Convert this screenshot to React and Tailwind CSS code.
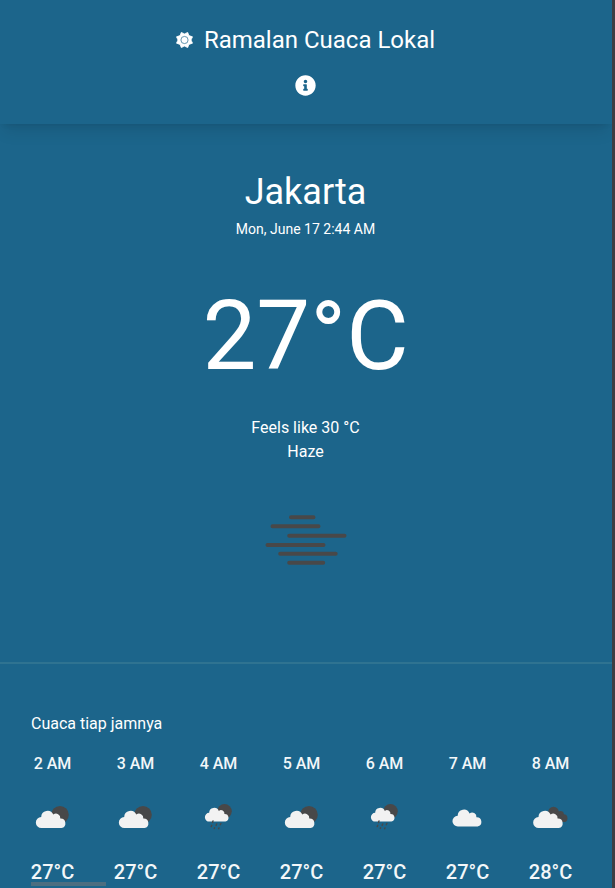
import { FaInfoCircle } from "react-icons/fa";

const CLOUD =
  "M5.500 22a5.500 5.500 0 0 1-.3-11A6.300 6.300 0 0 1 17.300 8.600a4.300 4.300 0 0 1 7 3.900A4.800 4.800 0 0 1 25.500 22Z";

function SunIcon() {
  return (
    <svg className="h-4 w-[17px]" viewBox="0 0 17 16" fill="none">
      <path
        fill="#fff"
        stroke="#fff"
        strokeWidth=".8"
        strokeLinejoin="round"
        d="M5.300.4 8.500 1.900 11.700.4 12.900 3.600 16.500 4.800 15 8 16.500 11.200 12.900 12.400 11.700 15.600 8.500 14.100 5.300 15.600 4.100 12.400.5 11.200 2 8 .5 4.800 4.100 3.600Z"
      />
      <circle cx="8.500" cy="8" r="3.600" stroke="#1c658b" strokeOpacity=".75" strokeWidth=".9" />
    </svg>
  );
}

function HazeIcon() {
  return (
    <svg className="h-[54px] w-[84px]" viewBox="264 513 84 54" stroke="#484849" strokeWidth="4" strokeLinecap="round">
      <path d="M291 517.200h22.500M272.500 526.300h46M289.200 535.800h55.300M267.500 545h56M280.200 553.800h55.500M289.200 562.700h34" />
    </svg>
  );
}

function WeatherIcon({ kind }) {
  if (kind === "rain") {
    return (
      <svg className="h-[50px] w-[50px]" viewBox="0 0 50 50">
        <circle cx="31.500" cy="19.300" r="7.300" fill="#484849" />
        <path transform="translate(12 12) scale(.8)" fill="#f2f2f2" d={CLOUD} />
        <path
          d="M20 28.900l-.5 1.600M18.800 33.300l-.6 1.300M23.700 32l-.6 1.400M21.600 35.800l-.3 .8M27.900 31.500l-.6 1.200M26 35.900l-.4 .8"
          stroke="#484849"
          strokeWidth="1.400"
          strokeLinecap="round"
        />
      </svg>
    );
  }
  if (kind === "cloud") {
    return (
      <svg className="h-[50px] w-[50px]" viewBox="0 0 50 50">
        <path transform="translate(10.600 13) scale(.98)" fill="#f2f2f2" d={CLOUD} />
      </svg>
    );
  }
  return (
    <svg className="h-[50px] w-[50px]" viewBox="0 0 50 50">
      {kind === "broken" ? (
        <g fill="#484849">
          <circle cx="28.500" cy="20" r="5.300" />
          <circle cx="35.500" cy="22.300" r="3.300" />
          <circle cx="38.600" cy="26.200" r="3.900" />
          <path d="M28 20h7l3 10h-9Z" />
        </g>
      ) : (
        <circle cx="33" cy="22.800" r="8.800" fill="#484849" />
      )}
      <path transform={kind === "broken" ? "translate(8.300 14)" : "translate(9 14)"} fill="#f2f2f2" d={CLOUD} />
    </svg>
  );
}

const HOURS = [
  { time: "2 AM", kind: "partly", temp: "27°C" },
  { time: "3 AM", kind: "partly", temp: "27°C" },
  { time: "4 AM", kind: "rain", temp: "27°C" },
  { time: "5 AM", kind: "partly", temp: "27°C" },
  { time: "6 AM", kind: "rain", temp: "27°C" },
  { time: "7 AM", kind: "cloud", temp: "27°C" },
  { time: "8 AM", kind: "broken", temp: "28°C" },
];

export default function App() {
  return (
    <div className="flex h-[888px] w-[615px] overflow-hidden bg-[#3e3e43] font-['Roboto',sans-serif] text-white">
      <div className="flex w-[612px] shrink-0 flex-col overflow-hidden bg-[#1c658b]">
        <header className="flex h-[124px] shrink-0 flex-col items-center pt-6 pr-px shadow-lg">
          <div className="flex h-8 items-center gap-[11px]">
            <SunIcon />
            <h1 className="text-2xl leading-8 whitespace-nowrap">Ramalan Cuaca Lokal</h1>
          </div>
          <FaInfoCircle className="mt-[19px] h-[21px] w-[21px]" />
        </header>

        <main className="flex h-[538px] shrink-0 flex-col items-center pt-12 pr-px text-center">
          <h2 className="text-4xl leading-10">Jakarta</h2>
          <p className="mt-[7px] text-sm leading-5">Mon, June 17 2:44 AM</p>
          <p className="mt-[49px] text-8xl leading-[96px]">27°C</p>
          <p className="mt-8 text-base leading-6">Feels like 30 °C</p>
          <p className="text-base leading-6">Haze</p>
          <div className="mt-[49px] pl-px">
            <HazeIcon />
          </div>
        </main>

        <section className="flex grow flex-col border-t-2 border-[#2f7391] pt-12 pl-[31px]">
          <h3 className="text-base leading-6">Cuaca tiap jamnya</h3>
          <ul className="mt-4 flex gap-10">
            {HOURS.map(({ time, kind, temp }) => (
              <li key={time} className="flex w-[43px] shrink-0 flex-col items-center">
                <span className="text-base leading-6 font-medium whitespace-nowrap text-[#f3f7f9]">{time}</span>
                <span className="mt-4 mr-[2px] flex w-[50px] justify-center">
                  <WeatherIcon kind={kind} />
                </span>
                <span className="mt-4 text-xl leading-7 font-medium whitespace-nowrap text-[#f3f7f9]">{temp}</span>
              </li>
            ))}
          </ul>
          <div className="-mt-1 h-1 w-[75px] shrink-0 bg-[#4c6e80]" />
        </section>
      </div>
    </div>
  );
}
